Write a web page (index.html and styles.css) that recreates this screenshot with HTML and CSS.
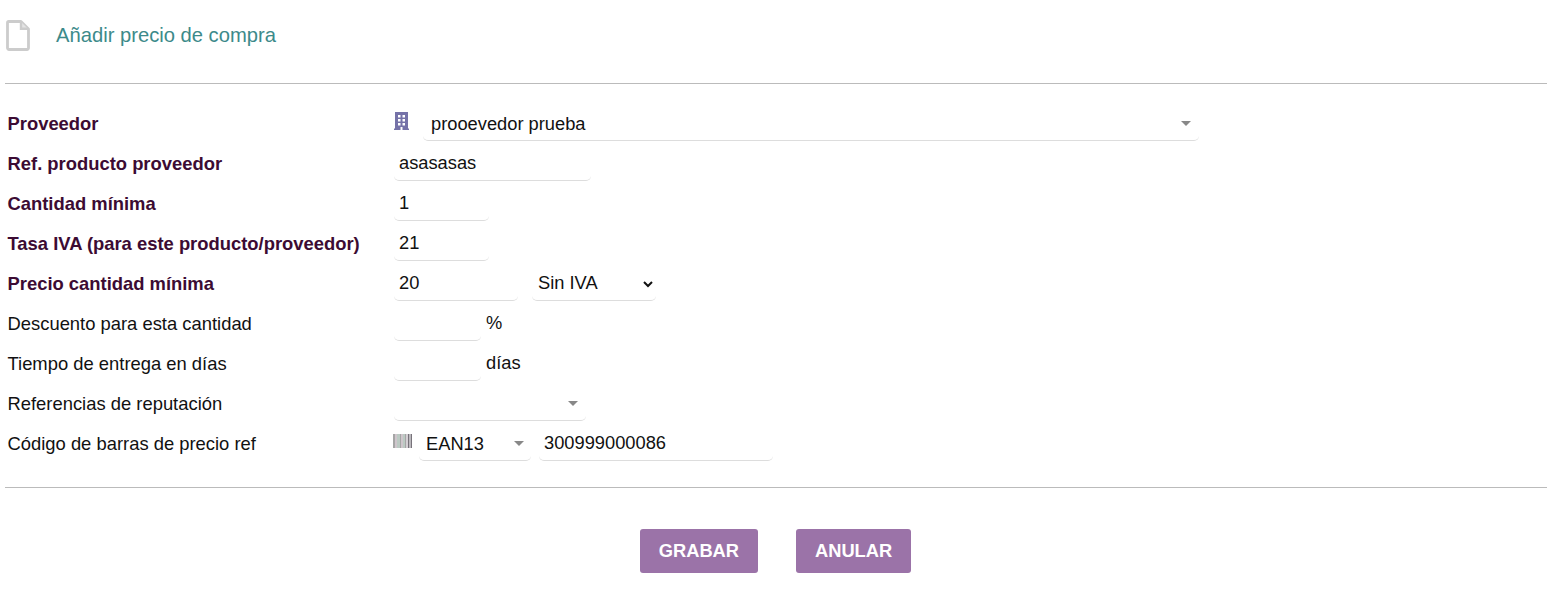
FILE: index.html
```html
<!DOCTYPE html>
<html lang="es">
<head>
    <meta charset="UTF-8">
    <title>Añadir precio de compra</title>
    <link rel="stylesheet" href="styles.css">
</head>
<body>
    <div class="page-head">
        <svg class="page-icon" width="24" height="31" viewBox="0 0 24 31">
            <path d="M2.5 1.5H15L22.5 9V28a1.5 1.5 0 0 1-1.5 1.5H3A1.5 1.5 0 0 1 1.5 28V2.5a1 1 0 0 1 1-1Z" fill="none" stroke="#cccccc" stroke-width="2.8" stroke-linejoin="round"/>
            <path d="M15 2V8.7H22" fill="#e4e4e4" stroke="#cccccc" stroke-width="2.4"/>
        </svg>
        <div class="page-title">Añadir precio de compra</div>
    </div>

    <form class="price-form">
        <div class="row">
            <label class="required">Proveedor</label>
            <div class="field">
                <svg class="building" width="15" height="18" viewBox="0 0 15 18">
                    <path fill-rule="evenodd" fill="#7572a8" d="M1 0H14V16.5H15V18H0V16.5H1ZM4 3V5.5H6.5V3ZM8.5 3V5.5H11V3ZM4 7V9.5H6.5V7ZM8.5 7V9.5H11V7ZM4 11V13.5H6.5V11ZM8.5 11V13.5H11V11ZM6.5 15V18H8.5V15Z"/>
                </svg>
                <div class="combo combo-provider"><span>prooevedor prueba</span><i class="arrow"></i></div>
            </div>
        </div>
        <div class="row">
            <label class="required">Ref. producto proveedor</label>
            <div class="field"><input class="w-ref" type="text" value="asasasas"></div>
        </div>
        <div class="row">
            <label class="required">Cantidad mínima</label>
            <div class="field"><input class="w-qty" type="text" value="1"></div>
        </div>
        <div class="row">
            <label class="required">Tasa IVA (para este producto/proveedor)</label>
            <div class="field"><input class="w-qty" type="text" value="21"></div>
        </div>
        <div class="row">
            <label class="required">Precio cantidad mínima</label>
            <div class="field">
                <input class="w-price" type="text" value="20">
                <select class="vat-select"><option>Sin IVA</option></select>
            </div>
        </div>
        <div class="row">
            <label>Descuento para esta cantidad</label>
            <div class="field"><input class="w-small" type="text"><span class="unit">%</span></div>
        </div>
        <div class="row">
            <label>Tiempo de entrega en días</label>
            <div class="field"><input class="w-small" type="text"><span class="unit">días</span></div>
        </div>
        <div class="row">
            <label>Referencias de reputación</label>
            <div class="field"><div class="combo combo-rep"><i class="arrow"></i></div></div>
        </div>
        <div class="row">
            <label>Código de barras de precio ref</label>
            <div class="field">
                <svg class="barcode" width="19" height="14" viewBox="0 0 19 14">
                    <path fill="#a6a6a6" d="M0 0h2v14H0zM7 0h1v14H7zM12 0h1v14h-1z"/>
                    <path fill="#cfc6cc" d="M2 0h2v14H2zM8 0h2v14H8z"/>
                    <path fill="#bccac3" d="M4 0h3v14H4zM10 0h2v14h-2z"/>
                    <path fill="#d5d0d5" d="M13 0h2v14h-2z"/>
                    <path fill="#77727a" d="M15 0h1.5v14H15zM17.5 0h1.5v14h-1.5z"/>
                </svg>
                <div class="combo combo-ean"><span>EAN13</span><i class="arrow"></i></div>
                <input class="w-barcode" type="text" value="300999000086">
            </div>
        </div>
    </form>

    <div class="actions">
        <button class="button" type="button">GRABAR</button>
        <button class="button" type="button">ANULAR</button>
    </div>
</body>
</html>
```

FILE: styles.css
```css
body {
    margin: 0;
    font-family: "Liberation Sans", Arial, sans-serif;
    font-size: 18.3px;
    color: #111;
    background: #fff;
}
.page-head {
    display: flex;
    align-items: center;
    height: 84px;
    margin: 0 2px 0 5px;
    padding-bottom: 13px;
    box-sizing: border-box;
    border-bottom: 1px solid #bbb;
}
.page-icon {
    margin-left: 1px;
    flex: none;
}
.page-title {
    margin-left: 26px;
    font-size: 20.2px;
    color: #3c8a8a;
}
.price-form {
    margin: 0 2px 0 5px;
    padding: 20px 0 23px;
    border-bottom: 1px solid #bbb;
}
.row {
    display: flex;
    align-items: center;
    height: 40px;
}
.row label {
    width: 389px;
    padding-left: 2.5px;
    box-sizing: border-box;
    flex: none;
    font-size: 18.4px;
}
.row label.required {
    font-weight: bold;
    color: #3c0b33;
}
.field {
    display: flex;
    align-items: center;
}
input, select {
    font: inherit;
    color: #111;
    background: #fff;
    height: 34px;
    padding: 0 5px 2px;
    box-sizing: border-box;
    border: none;
    border-bottom: 1px solid #ddd;
    border-radius: 5px;
    outline: none;
}
.w-ref { width: 197px; }
.w-qty { width: 95px; }
.w-price { width: 124px; }
.w-small { width: 87px; }
.w-barcode { width: 234px; margin-left: 8px; }
.vat-select {
    width: 124px;
    margin-left: 14px;
    padding: 0 2px 2px;
}
.unit {
    margin-left: 5px;
    margin-bottom: 2px;
}
.combo {
    position: relative;
    height: 34px;
    line-height: 34px;
    box-sizing: border-box;
    border-bottom: 1px solid #ddd;
    border-radius: 5px;
}
.combo-provider {
    width: 776px;
    margin-left: 14px;
    padding-left: 8px;
}
.combo-rep { width: 192px; }
.combo-ean {
    width: 112px;
    margin-left: 7px;
    padding-left: 7px;
}
.arrow {
    position: absolute;
    right: 8px;
    top: 14px;
    border-style: solid;
    border-width: 5px 5px 0 5px;
    border-color: #888 transparent transparent transparent;
}
.combo-ean .arrow {
    right: 7px;
}
.building {
    margin-bottom: 6px;
}
.barcode {
    margin-left: -1px;
    margin-bottom: 6px;
}
.actions {
    display: flex;
    justify-content: center;
    gap: 38px;
    margin-top: 41px;
    padding-left: 2px;
}
.button {
    height: 44px;
    padding: 0 19px;
    border: none;
    border-radius: 3px;
    background: #9b73a8;
    color: #fff;
    font: bold 18.3px "Liberation Sans", Arial, sans-serif;
}
```
